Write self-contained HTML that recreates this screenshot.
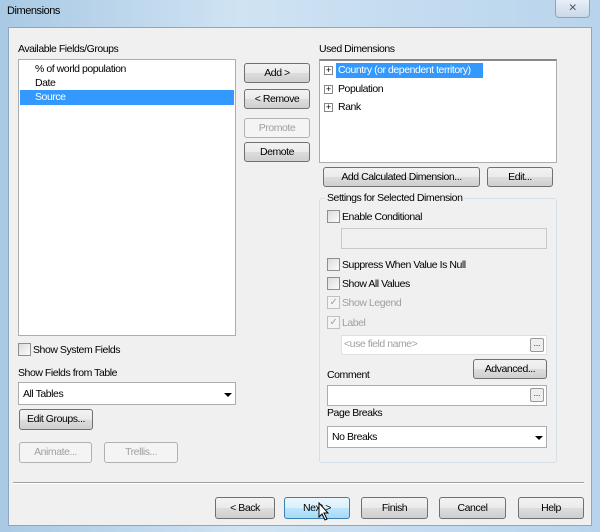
<!DOCTYPE html>
<html><head><style>
*{box-sizing:border-box;margin:0;padding:0}
body{width:600px;height:532px;overflow:hidden;font-family:"Liberation Sans",sans-serif;font-size:10.5px;letter-spacing:-0.45px;color:#000;background:linear-gradient(90deg,#a9c9e4,#cfe3f3 40%,#b8d4ec);position:relative}
.a{position:absolute;white-space:nowrap}
.body{position:absolute;left:8px;top:27px;width:584px;height:499px;background:#f0f0f0;border:1px solid #8ea7c0}
.btn{position:absolute;border:1px solid #707070;border-radius:3px;background:linear-gradient(#f2f2f2,#ebebeb 50%,#dddddd 51%,#cfcfcf);text-align:center;line-height:18px}
.dis{border-color:#adb2b5;color:#a0a0a0;background:#f4f4f4}
.box{position:absolute;background:#fff;border:1px solid #abadb3}
.cb{position:absolute;width:13px;height:13px;border:1px solid #8e8f8f;background:linear-gradient(135deg,#dcdcdc,#fbfbfb)}
.cbd{border-color:#c0c0c0;background:#f4f4f4;color:#a0a0a0;font-size:10px;line-height:11px;text-align:center}
.pl{position:absolute;width:9px;height:9px;border:1px solid #888;background:#fff;font-size:9px;line-height:7px;text-align:center;letter-spacing:0}
.g{color:#a0a0a0}
.arr{position:absolute;width:0;height:0;border-left:4px solid transparent;border-right:4px solid transparent;border-top:4px solid #000}
.dots{position:absolute;width:14px;height:14px;border:1px solid #999;border-radius:2px;background:#eee;font-size:8px;line-height:10px;text-align:center;letter-spacing:0}
</style></head><body>
<div class="a" style="left:7px;top:5px;font-size:11px">Dimensions</div>
<div class="a" style="left:555px;top:0;width:35px;height:18px;border:1px solid #8aa;border-top:none;border-radius:0 0 4px 4px;background:linear-gradient(#e8eff6,#c9d8e8);text-align:center;line-height:16px;color:#556">✕</div>
<div class="body"></div>
<div class="a" style="left:18px;top:43px">Available Fields/Groups</div>
<div class="box" style="left:18px;top:59px;width:218px;height:277px"></div>
<div class="a" style="left:35px;top:63px">% of world population</div>
<div class="a" style="left:35px;top:77px">Date</div>
<div class="a" style="left:20px;top:90px;width:214px;height:15px;background:#3399ff;color:#fff;padding-left:15px;line-height:15px">Source</div>

<div class="btn" style="left:244px;top:63px;width:66px;height:20px">Add &gt;</div>
<div class="btn" style="left:244px;top:89px;width:66px;height:20px">&lt; Remove</div>
<div class="btn dis" style="left:244px;top:118px;width:66px;height:20px">Promote</div>
<div class="btn" style="left:244px;top:142px;width:66px;height:20px">Demote</div>

<div class="a" style="left:319px;top:43px">Used Dimensions</div>
<div class="box" style="left:319px;top:59px;width:238px;height:104px;border-top:2px solid #888"></div>
<div class="pl" style="left:324px;top:66px">+</div>
<div class="a" style="left:336px;top:63px;width:147px;height:15px;background:#3399ff;color:#fff;line-height:15px;padding-left:2px">Country (or dependent territory)</div>
<div class="pl" style="left:324px;top:85px">+</div>
<div class="a" style="left:338px;top:83px">Population</div>
<div class="pl" style="left:324px;top:103px">+</div>
<div class="a" style="left:338px;top:101px">Rank</div>

<div class="btn" style="left:323px;top:167px;width:157px;height:20px">Add Calculated Dimension...</div>
<div class="btn" style="left:487px;top:167px;width:66px;height:20px">Edit...</div>

<div class="a" style="left:319px;top:198px;width:238px;height:265px;border:1px solid #d5dfe5;border-radius:3px"></div>
<div class="a" style="left:325px;top:192px;background:#f0f0f0;padding:0 2px">Settings for Selected Dimension</div>
<div class="cb" style="left:327px;top:210px"></div><div class="a" style="left:342px;top:211px">Enable Conditional</div>
<div class="box" style="left:341px;top:228px;width:206px;height:21px;background:#f0f0f0;border-color:#c8c8c8"></div>
<div class="cb" style="left:327px;top:258px"></div><div class="a" style="left:342px;top:259px">Suppress When Value Is Null</div>
<div class="cb" style="left:327px;top:277px"></div><div class="a" style="left:342px;top:278px">Show All Values</div>
<div class="cb cbd" style="left:327px;top:296px">✓</div><div class="a g" style="left:342px;top:297px">Show Legend</div>
<div class="cb cbd" style="left:327px;top:316px">✓</div><div class="a g" style="left:342px;top:317px">Label</div>
<div class="box" style="left:341px;top:335px;width:206px;height:20px;border-color:#e0e0e0"></div>
<div class="a g" style="left:344px;top:338px">&lt;use field name&gt;</div>
<div class="dots" style="left:530px;top:338px">...</div>
<div class="btn" style="left:473px;top:359px;width:74px;height:20px">Advanced...</div>
<div class="a" style="left:327px;top:369px">Comment</div>
<div class="box" style="left:327px;top:385px;width:220px;height:21px"></div>
<div class="dots" style="left:530px;top:388px">...</div>
<div class="a" style="left:327px;top:407px">Page Breaks</div>
<div class="box" style="left:327px;top:426px;width:220px;height:22px"></div>
<div class="a" style="left:332px;top:431px">No Breaks</div>
<div class="arr" style="left:535px;top:436px"></div>

<div class="cb" style="left:18px;top:343px"></div><div class="a" style="left:33px;top:344px">Show System Fields</div>
<div class="a" style="left:18px;top:367px">Show Fields from Table</div>
<div class="box" style="left:18px;top:382px;width:218px;height:23px"></div>
<div class="a" style="left:23px;top:388px">All Tables</div>
<div class="arr" style="left:224px;top:393px"></div>
<div class="btn" style="left:19px;top:409px;width:74px;height:21px">Edit Groups...</div>
<div class="btn dis" style="left:19px;top:442px;width:73px;height:21px">Animate...</div>
<div class="btn dis" style="left:104px;top:442px;width:74px;height:21px">Trellis...</div>

<div class="a" style="left:13px;top:482px;width:571px;height:2px;border-top:1px solid #a0a0a0;border-bottom:1px solid #fff"></div>
<div class="btn" style="left:215px;top:497px;width:60px;height:22px;line-height:20px">&lt; Back</div>
<div class="btn" style="left:284px;top:497px;width:66px;height:22px;line-height:20px;border-color:#3c7fb1;background:linear-gradient(#eaf6fd,#d9f0fc 50%,#bee6fd 51%,#a7d9f5)">Next &gt;</div>
<div class="btn" style="left:361px;top:497px;width:67px;height:22px;line-height:20px">Finish</div>
<div class="btn" style="left:439px;top:497px;width:67px;height:22px;line-height:20px">Cancel</div>
<div class="btn" style="left:518px;top:497px;width:66px;height:22px;line-height:20px">Help</div>
<svg class="a" style="left:318px;top:502px" width="12" height="19" viewBox="0 0 12 19"><path d="M1 1 L1 15 L4 12 L7 18 L9 17 L6 11 L10 11 Z" fill="#fff" stroke="#000" stroke-width="1"/></svg>
</body></html>
